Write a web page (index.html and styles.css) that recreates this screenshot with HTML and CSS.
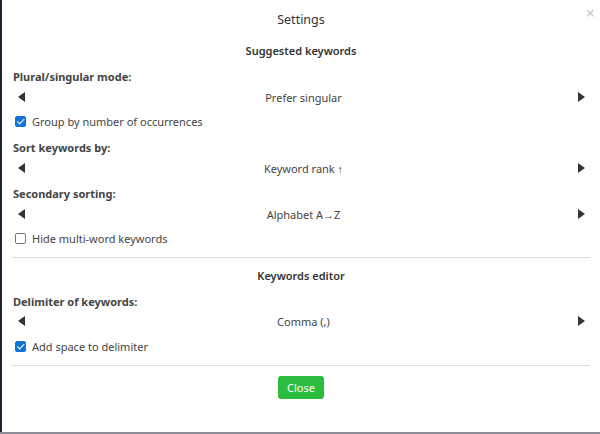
FILE: index.html
```html
<!DOCTYPE html>
<html>
<head>
<meta charset="utf-8">
<link rel="stylesheet" href="styles.css">
</head>
<body>
<div class="page">
  <div class="modal">
    <div class="modal-header">
      <h1 class="title">Settings</h1>
      <span class="close-x">&times;</span>
    </div>
    <div class="modal-body">
      <h2 class="section">Suggested keywords</h2>
      <div class="label first">Plural/singular mode:</div>
      <div class="chooser tight"><span class="arr left"></span><span class="val">Prefer singular</span><span class="arr right"></span></div>
      <label class="check"><span class="box on"></span>Group by number of occurrences</label>
      <div class="label after-check">Sort keywords by:</div>
      <div class="chooser tight"><span class="arr left"></span><span class="val">Keyword rank ↑</span><span class="arr right"></span></div>
      <div class="label">Secondary sorting:</div>
      <div class="chooser tight"><span class="arr left"></span><span class="val">Alphabet A→Z</span><span class="arr right"></span></div>
      <label class="check"><span class="box"></span>Hide multi-word keywords</label>
      <hr class="sep">
      <h2 class="section second">Keywords editor</h2>
      <div class="label">Delimiter of keywords:</div>
      <div class="chooser tighter"><span class="arr left"></span><span class="val">Comma (,)</span><span class="arr right"></span></div>
      <label class="check loose"><span class="box on"></span>Add space to delimiter</label>
      <hr class="sep">
      <div class="footer"><button class="btn">Close</button></div>
    </div>
  </div>
</div>
</body>
</html>
```
FILE: styles.css
```css
html, body { margin: 0; padding: 0; }
body {
  width: 600px; height: 434px; overflow: hidden;
  background: #8a8d94;
  font-family: "Noto Sans", "Open Sans", sans-serif;
  color: #444;
}
.page {
  height: 432px;
  border-left: 2px solid #1c2230;
}
.modal {
  background: #fff;
  height: 432px;
  position: relative;
}
.modal-header {
  height: 36px;
  padding-top: 2px;
  display: flex; align-items: center; justify-content: center;
}
.title {
  margin: 0;
  font-size: 12.5px;
  font-weight: 400;
  color: #333;
  line-height: 20px;
}
.close-x {
  position: absolute;
  right: 5px; top: 3px;
  font-size: 16px;
  color: #c8c8c8;
  line-height: 20px;
}
.modal-body {
  padding: 3px 10px 0 10px;
}
.section {
  margin: 0;
  font-size: 11px;
  font-weight: 600;
  color: #333;
  text-align: center;
  line-height: 20px;
}
.section.second { margin-top: 3px; }
.label {
  margin-top: 6px;
  font-size: 11px;
  font-weight: 700;
  color: #444;
  line-height: 20px;
  padding-left: 1px;
}
.label.after-check { margin-top: 7px; }
.chooser {
  margin-top: 1px;
  display: flex; align-items: center;
  height: 20px;
  padding: 0 5px 0 6px;
}
.chooser.tight { margin-top: 0; }
.chooser.tighter { margin-top: -1px; }
.val {
  flex: 1;
  text-align: center;
  font-size: 11px;
  color: #444;
  padding-left: 4px;
}
.arr { width: 0; height: 0; border-top: 5px solid transparent; border-bottom: 5px solid transparent; }
.arr.left { border-right: 7px solid #333; }
.arr.right { border-left: 7px solid #333; }
.check {
  display: flex; align-items: center;
  margin-top: 4px;
  height: 20px;
  font-size: 11px;
  color: #444;
  padding-left: 3px;
}
.check.loose { margin-top: 5px; }
.box {
  width: 9px; height: 9px;
  border: 1px solid #767676;
  border-radius: 2px;
  margin-right: 6px;
  background: #fff;
  position: relative;
}
.box.on { background: #0f75d8; border-color: #0f75d8; }
.box.on::after {
  content: "";
  position: absolute;
  left: 2.5px; top: 0px;
  width: 2.5px; height: 5.5px;
  border: solid #fff;
  border-width: 0 1.5px 1.5px 0;
  transform: rotate(45deg);
}
.sep {
  margin: 9px 0 8px 0;
  border: 0;
  border-top: 1px solid #dcdcdc;
}
.footer { display: flex; justify-content: center; padding-top: 2px; }
.btn {
  font-family: inherit;
  font-size: 11px;
  color: #fff;
  background: #2dbd3e;
  border: 0;
  border-radius: 3px;
  width: 46px; height: 23px;
  padding: 0;
}
```
